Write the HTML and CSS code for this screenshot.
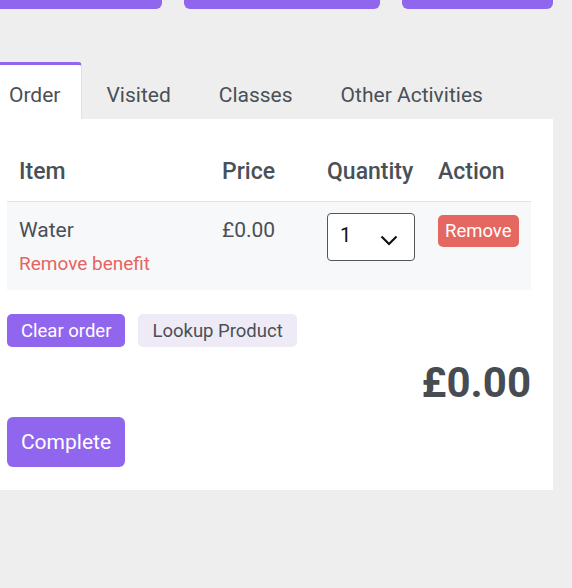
FILE: index.html
```html
<!DOCTYPE html>
<html lang="en">
<head>
    <meta charset="UTF-8">
    <meta name="viewport" content="width=device-width, initial-scale=1.0">
    <title>Order</title>
    <link rel="stylesheet" href="styles.css">
</head>
<body>
    <div class="page">
        <div class="top-actions">
            <button class="top-btn wide-1"></button>
            <button class="top-btn wide-2"></button>
            <button class="top-btn wide-3"></button>
        </div>

        <div class="tabs">
            <div class="tab active">Order</div>
            <div class="tab">Visited</div>
            <div class="tab">Classes</div>
            <div class="tab">Other Activities</div>
        </div>

        <div class="panel">
            <table class="order-table">
                <thead>
                    <tr>
                        <th class="col-item">Item</th>
                        <th class="col-price">Price</th>
                        <th class="col-qty">Quantity</th>
                        <th>Action</th>
                    </tr>
                </thead>
                <tbody>
                    <tr>
                        <td>
                            <div>Water</div>
                            <a class="benefit-link">Remove benefit</a>
                        </td>
                        <td>£0.00</td>
                        <td>
                            <span class="qty-select">
                                <select>
                                    <option>1</option>
                                    <option>2</option>
                                    <option>3</option>
                                </select>
                                <svg class="chevron" width="18" height="11" viewBox="0 0 18 11">
                                    <path d="M1.5 1.5 L9 9 L16.5 1.5" fill="none" stroke="#111" stroke-width="2.2"/>
                                </svg>
                            </span>
                        </td>
                        <td><button class="btn-remove">Remove</button></td>
                    </tr>
                </tbody>
            </table>

            <div class="order-tools">
                <button class="btn btn-purple">Clear order</button>
                <button class="btn btn-light">Lookup Product</button>
            </div>

            <div class="total">£0.00</div>

            <button class="btn-complete">Complete</button>
        </div>
    </div>
</body>
</html>
```

FILE: styles.css
```css
body {
    margin: 0;
    background: #eeeeee;
    font-family: Roboto, "Liberation Sans", sans-serif;
    color: #495057;
}
.page {
    margin-left: -15px;
    width: 568px;
}
.top-actions {
    display: flex;
    gap: 22px;
}
.top-btn {
    height: 9px;
    border: none;
    background: #9166ee;
    border-radius: 0 0 6px 6px;
}
.wide-1 { width: 177px; }
.wide-2 { width: 196px; }
.wide-3 { width: 151px; }
.tabs {
    display: flex;
    margin-top: 53px;
}
.tab {
    padding: 18px 24px 12px;
    font-size: 21px;
    line-height: 24px;
    border-top: 3px solid transparent;
}
.tab.active {
    background: #fff;
    border-top-color: #9166ee;
    border-right: 1px solid #dee2e6;
    border-radius: 0 4px 0 0;
    padding-right: 21px;
}
.panel {
    background: #fff;
    padding: 22px 22px 23px;
}
.order-table {
    width: 100%;
    table-layout: fixed;
    border-collapse: collapse;
    font-size: 21px;
}
.order-table th,
.order-table td {
    box-sizing: border-box;
}
.order-table th {
    text-align: left;
    font-size: 23px;
    font-weight: 500;
    line-height: 24px;
    padding: 19px 12px 17px;
    border-bottom: 1px solid #dee2e6;
}
.col-item { width: 203px; }
.col-price { width: 105px; }
.col-qty { width: 111px; }
.order-table td {
    background: #f7f8fa;
    padding: 16px 12px 14px;
    line-height: 24px;
    vertical-align: top;
}
.benefit-link {
    display: block;
    margin-top: 10px;
    font-size: 19px;
    color: #e5645f;
}
.qty-select {
    position: relative;
    display: inline-block;
    margin-top: -5px;
}
.qty-select select {
    appearance: none;
    width: 88px;
    height: 48px;
    padding: 0 12px 4px;
    border: 1px solid #555;
    border-radius: 4px;
    background: #fff;
    font-family: inherit;
    font-size: 20px;
    color: #111;
}
.chevron {
    position: absolute;
    left: 53px;
    top: 22px;
}
.btn-remove {
    margin-top: -3px;
    height: 32px;
    padding: 0 7px;
    border: none;
    border-radius: 5px;
    background: #e56762;
    color: #fff;
    font-family: inherit;
    font-size: 18.5px;
}
.order-tools {
    display: flex;
    gap: 13px;
    margin-top: 24px;
}
.btn {
    height: 33px;
    padding: 0 14px;
    border: none;
    border-radius: 5px;
    font-family: inherit;
    font-size: 18.5px;
}
.btn-purple {
    background: #9166ee;
    color: #fff;
}
.btn-light {
    background: #eeebf6;
    color: #495057;
}
.total {
    margin-top: 15px;
    text-align: right;
    font-size: 42px;
    font-weight: 700;
    line-height: 42px;
    color: #474c52;
}
.btn-complete {
    display: block;
    margin-top: 13px;
    width: 118px;
    height: 50px;
    border: none;
    border-radius: 6px;
    background: #9166ee;
    color: #fff;
    font-family: inherit;
    font-size: 21px;
}
```
